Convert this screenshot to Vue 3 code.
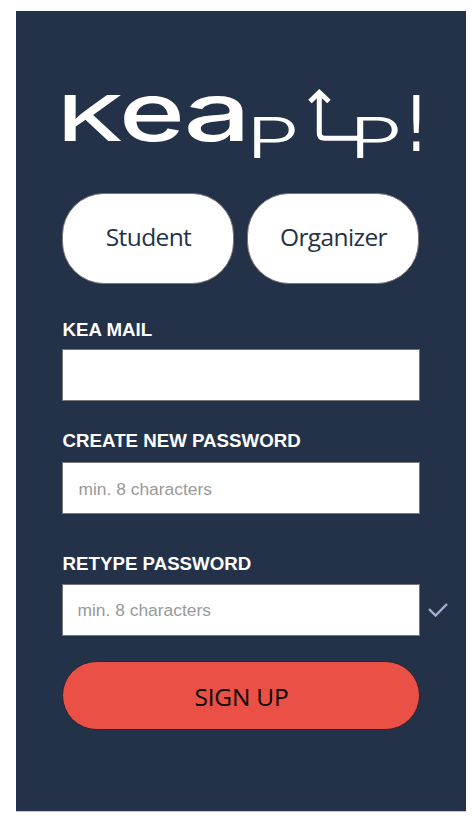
<script setup>
import { ref } from 'vue'

const roles = ['Student', 'Organizer']
const mail = ref('')
const password = ref('')
const retyped = ref('')
</script>

<template>
  <main class="screen">
    <svg class="logo" viewBox="0 0 360 72" width="360" height="72">
      <g class="letters">
        <text class="k" transform="translate(-5 55) scale(1.54 1)">K</text>
        <text class="wide" transform="translate(57 54.5) scale(1.37 1)">e</text>
        <text class="wide" transform="translate(121.5 54.5) scale(1.45 1)">a</text>
        <text class="thin" transform="translate(184 71.5) scale(1.53 1)">P</text>
        <text class="thin" transform="translate(287 71.5) scale(1.53 1)">P</text>
        <text class="bang" transform="translate(342.200 65) scale(0.78 1)">!</text>
      </g>
      <path class="arrow" d="M248 15.500 257.300 6.500 267 15.500" />
      <path class="shaft" d="M257.300 7V47Q257.300 52.300 262.500 52.300H297" />
    </svg>

    <div class="roles">
      <button v-for="role in roles" :key="role" class="role" type="button">{{ role }}</button>
    </div>

    <form class="form" @submit.prevent>
      <label class="field">
        <span class="label">KEA MAIL</span>
        <input v-model="mail" class="input" type="email" />
      </label>
      <label class="field create">
        <span class="label">CREATE NEW PASSWORD</span>
        <input v-model="password" class="input" type="password" placeholder="min. 8 characters" />
      </label>
      <label class="field retype">
        <span class="label">RETYPE PASSWORD</span>
        <span class="row">
          <input v-model="retyped" class="input" type="password" placeholder="min. 8 characters" />
          <svg class="check" viewBox="0 0 20 14" width="20" height="14">
            <path d="M1 6 7.500 12.500 19 1" />
          </svg>
        </span>
      </label>
      <button class="submit" type="submit">SIGN UP</button>
    </form>
  </main>
</template>

<style>
body {
  background: #fff;
}
</style>

<style scoped>
.screen {
  box-sizing: border-box;
  width: 450px;
  height: 801px;
  margin: 11px 0 0 16px;
  padding: 75px 46px 0;
  background: #243249;
  border-bottom: 1px solid #c3c8d1;
  font-family: "Liberation Sans", Arial, sans-serif;
}
.logo {
  display: block;
  overflow: visible;
}
.letters {
  fill: #fff;
  font-family: Inter, sans-serif;
}
.k {
  font-size: 63px;
  font-weight: 500;
}
.wide {
  font-size: 82px;
  font-weight: 500;
}
.thin {
  font-size: 56px;
  font-weight: 300;
}
.bang {
  font-family: "DejaVu Sans", sans-serif;
  font-size: 77px;
}
.arrow,
.shaft {
  fill: none;
  stroke: #fff;
  stroke-width: 5px;
}
.roles {
  display: flex;
  gap: 13px;
  width: 358px;
  margin-top: 35px;
}
.role {
  box-sizing: border-box;
  width: 172px;
  height: 91px;
  padding: 0 0 4px 1px;
  border: 1px solid #777;
  border-radius: 42px;
  background: #fff;
  color: #243249;
  font: 24.500px "Open Sans", sans-serif;
  letter-spacing: -0.6px;
}
.form {
  display: flex;
  flex-direction: column;
  width: 358px;
  margin-top: 35px;
}
.field {
  display: flex;
  flex-direction: column;
  gap: 8px;
}
.create {
  gap: 10px;
  margin-top: 29px;
}
.retype {
  gap: 9px;
  margin-top: 39px;
}
.label {
  padding-left: 0.6px;
  color: #fff;
  font-size: 18.700px;
  font-weight: 700;
  line-height: 22px;
}
.input {
  box-sizing: border-box;
  flex-shrink: 0;
  width: 358px;
  height: 52px;
  padding: 2px 15.500px 0;
  border: 1px solid #777;
  border-radius: 0;
  outline: none;
  background: #fff;
  font: 17.400px "Liberation Sans", Arial, sans-serif;
}
.input::placeholder {
  color: #999;
  opacity: 1;
}
.row {
  display: flex;
  align-items: center;
  gap: 8px;
}
.retype .input {
  padding: 0 14.500px;
}
.check {
  flex-shrink: 0;
  fill: none;
  stroke: #a9add6;
  stroke-width: 2.400px;
}
.submit {
  box-sizing: border-box;
  height: 69px;
  margin-top: 25px;
  padding: 1px 0 0 1px;
  border: 1px solid #2b2529;
  border-radius: 35px;
  background: #eb5046;
  color: #000;
  font: 24.500px "Open Sans", sans-serif;
  letter-spacing: -0.2px;
}
</style>
